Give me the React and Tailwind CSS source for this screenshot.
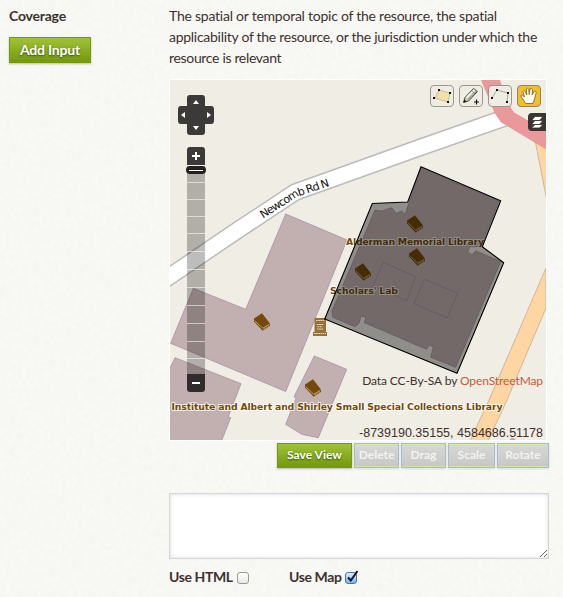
import React from "react";

const BOOKS = [[415, 224], [417, 257], [363, 272], [262, 322], [313, 388]];
const TICKS = [17, 34, 51, 68, 86, 104, 122, 140, 158, 176, 193];

function Book({ x, y }) {
  return (
    <g transform={`translate(${x - 8} ${y - 9})`}>
      <path d="M0 5.5 8 .3 16 10.5V13L8.7 17.8 0 8.5Z" fill="#734a08" />
      <path d="M.6 7.6 8.6 15.2 15.6 11.2M10.2 14.6v2.2M12.2 13.5v2.2M14.2 12.4v2" fill="none" stroke="#d5bfa0" strokeWidth=".7" />
    </g>
  );
}

function Halo({ x, y, width, children }) {
  return (
    <text x={x} y={y} textLength={width} fontSize="9.4" fontFamily="'DejaVu Sans', sans-serif" fontWeight="700" fill="#734a08" stroke="#fff" strokeOpacity=".75" strokeWidth="2" paintOrder="stroke" strokeLinejoin="round">
      {children}
    </text>
  );
}

function MapDrawing() {
  return (
    <svg viewBox="170 80 376 360" className="block h-[360px] w-[376px]">
      <rect x="170" y="80" width="376" height="360" fill="#f0ede5" />
      <path d="M535 140 544 186 548 206V140ZM546 268 489 400 470 441H488L507 400 546 308Z" fill="#fed6a4" stroke="#c9a98a" strokeWidth=".8" />
      <g fill="#c1b0af" stroke="#a590ab" strokeWidth=".8">
        <path d="M285.7 214 347 240 285.7 391.5 170.7 343.3 193.3 288.3 245.7 309.3Z" />
        <path d="M169 370 175 357.7 241 383.7 228.3 416.7 230.7 417.7 221.5 441H169Z" />
        <path d="M314.3 356 346.7 369.3 318.3 437.7 301.7 434.3 285.7 424.3 296 398.3 294 396.7Z" />
        <path d="M421 168 499 201 480.7 246.7H470L467.7 251.7 472 255 475.7 250.7 500.7 261.5 455.7 367.3 430.7 357.3 433.3 346.7 429 345 426.7 349.3 364.3 322.7 366 317.3 361 316 359 323.3 355 326.7 332.7 317.3 332 311 375 210 381.7 211 391.7 207.7 396 213.3 401.7 211 405 214.3Z" />
        <path d="M383 262.3 415.7 276.7 406.7 300.7 373 286ZM424.3 279.3 457.7 293.3 447.3 318 414 303.7Z" />
        <path d="M509 441 512 438 517 441Z" />
      </g>
      <path d="M160 283 232 234 295 192.3 420 147.5 510 116" fill="none" stroke="#bbb" strokeWidth="18" strokeLinejoin="round" />
      <path d="M160 283 232 234 295 192.3 420 147.5 510 116" fill="none" stroke="#fff" strokeWidth="15" strokeLinejoin="round" />
      <path d="M481 79H499L510.7 108 514 112.7 547 132V149.5L501 122 495 113Z" fill="#eb989a" stroke="#d98689" strokeWidth=".5" />
      <path id="newcomb" d="M263 218.5 297 196.8 340 182.5" fill="none" />
      <text fontSize="11" fontFamily="'DejaVu Sans', sans-serif" fill="#111" textLength="75">
        <textPath href="#newcomb" textLength="75">Newcomb Rd N</textPath>
      </text>
      {BOOKS.map(([x, y]) => <Book key={`${x}-${y}`} x={x} y={y} />)}
      <g fill="#98713a">
        <path d="M314.5 318H326V332H327V336H313V332H314.5Z" />
        <path d="M316 320.5h8.5M317 324.5h6.5M317.5 326.8h5M317 329h6M314 333.5h12" stroke="#eadfc9" strokeWidth="1" strokeDasharray="1.6 .6" />
      </g>
      <Halo x="346" y="245.3" width="138">Alderman Memorial Library</Halo>
      <Halo x="330" y="293.8" width="68">Scholars' Lab</Halo>
      <Halo x="171.5" y="409.7" width="331">Institute and Albert and Shirley Small Special Collections Library</Halo>
      <path d="M421 166.7 500.7 200.7 482.3 246.7 503.7 262.7 457 373.3 324.7 319 372.3 203.5 407.7 202Z" fill="#000" fillOpacity=".4" stroke="#000" strokeWidth="1.1" />
    </svg>
  );
}

function PanControl() {
  return (
    <svg viewBox="0 0 36 40" className="absolute left-2 top-[15px] h-10 w-9">
      <path d="M12 0H24Q27 0 27 3V11H33Q36 11 36 14V26Q36 29 33 29H27V37Q27 40 24 40H12Q9 40 9 37V29H3Q0 29 0 26V14Q0 11 3 11H9V3Q9 0 12 0Z" fill="#3c3a38" />
      <path d="M15 9h6l-3-4ZM15 31h6l-3 4ZM7 17v6l-4-3ZM29 17v6l4-3Z" fill="#fff" />
    </svg>
  );
}

function ZoomControl() {
  return (
    <div className="absolute left-[17px] top-[67px] w-[18px]">
      <div className="flex h-[18px] items-center justify-center rounded-t-[3px] bg-[#3c3a38]">
        <svg viewBox="0 0 8 8" className="h-2 w-2"><path d="M0 4h8M4 0v8" stroke="#fff" strokeWidth="2" /></svg>
      </div>
      <svg viewBox="0 0 18 209" className="block h-[209px] w-[18px]">
        <rect width="18" height="209" fill="#000" fillOpacity=".26" />
        {TICKS.map((t) => <rect key={t} y={t} width="18" height="1" fill="#fff" fillOpacity=".55" />)}
        <rect y="0" width="18" height="1" fill="#eee" />
      </svg>
      <div className="flex h-[18px] items-center justify-center rounded-b-[3px] bg-[#302c2b]">
        <div className="h-0.5 w-2 bg-white" />
      </div>
      <div className="absolute -left-px top-[19px] flex h-2 w-5 items-center justify-center rounded-sm bg-[#241f20]">
        <div className="h-px w-3.5 bg-white" />
      </div>
    </div>
  );
}

function Tool({ active, children }) {
  return (
    <div className={`h-[22px] w-6 rounded-[4px] border ${active ? "border-[#8f8668] bg-[#f2be2c]" : "border-[#999791] bg-[#efece4]"}`}>
      <svg viewBox="1 1 22 20" className="h-5 w-[22px]">{children}</svg>
    </div>
  );
}

function Toolbar() {
  return (
    <div className="absolute left-[260px] top-[5px] flex gap-[5px]">
      <Tool>
        <path d="M9 5 20 8 18 17 5 13Z" fill="#f3dfaa" stroke="#b7aa85" strokeWidth=".7" />
        <path d="M8 4h2v2H8ZM19 7h2v2h-2ZM17 16h2v2h-2ZM3 12h2v2h-2Z" fill="#111" />
      </Tool>
      <Tool>
        <path d="M4.500 17.500 6 12.500 14.500 3.500 18.500 6.500 9.500 16Z" fill="#c9cbb9" stroke="#44443c" strokeWidth="1" />
        <path d="M7.500 12.500 15.500 4.800" stroke="#fff" strokeWidth="1.300" />
        <path d="M8.800 14.500 17 6.800M12.800 5.800 16 8.800" stroke="#77776c" strokeWidth=".8" />
        <path d="M4.500 17.500 5.500 14.500 7.500 16.500Z" fill="#111" />
        <path d="M15 17h5M17.500 14.500v5" stroke="#111" strokeWidth="1.200" />
      </Tool>
      <Tool>
        <path d="M4 13 9 5 20 8 19 17" fill="none" stroke="#777" strokeWidth=".6" />
        <path d="M3 12h2v2h-2ZM8 4h2v2h-2ZM19 7h2v2h-2ZM18 16h2v2h-2Z" fill="#111" />
      </Tool>
      <Tool active>
        <path d="M8.500 18.500C7.500 15.500 4 13 4 10.500 5 9.500 6.500 10.500 7.500 12L6 6.500Q6.700 4.500 8.200 6.500L9.800 10 9.300 4Q10.500 2.500 11.700 4L12.200 9.500 13.200 3.700Q14.700 2.800 15.500 4.500L15.200 10 17.200 6.300Q19.500 5.700 19.200 7.800L17.500 14 16 18.500Z" fill="#fffdf0" stroke="#8a6b22" strokeWidth=".9" strokeLinejoin="round" />
      </Tool>
    </div>
  );
}

function Button({ green, size, children }) {
  return (
    <button className={`flex shrink-0 items-center justify-center whitespace-nowrap border pb-px font-bold ${size} ${green ? "border-[#749b0c] bg-linear-to-b from-[#a0c235] to-[#749909] text-white shadow-[0_1px_2px_rgba(0,0,0,0.25)] [text-shadow:0_1px_2px_#344a00]" : "border-[#a3bdd5] bg-linear-to-b from-[#d8d9d6] to-[#c7c8c5] text-[#f2f2ef] shadow-[inset_0_1px_0_#d9e5ad,inset_0_-1px_0_#d4dfb4,0_1px_2px_rgba(0,0,0,0.12)]"}`}>
      {children}
    </button>
  );
}

function PaperTexture() {
  return (
    <svg className="pointer-events-none absolute inset-0 h-full w-full opacity-[0.035]">
      <filter id="paper">
        <feTurbulence type="fractalNoise" baseFrequency="0.18" numOctaves="3" seed="4" />
        <feColorMatrix values="0 0 0 0 .45  0 0 0 0 .45  0 0 0 0 .35  2.5 0 0 0 -.9" />
      </filter>
      <rect width="100%" height="100%" filter="url(#paper)" />
    </svg>
  );
}

export default function App() {
  return (
    <div className="relative flex h-[597px] w-[563px] overflow-hidden bg-[#f8f9f4] pl-[9px] font-[Lato,sans-serif] text-[14px] text-[#40312f]">
      <PaperTexture />
      <aside className="relative w-[160px] shrink-0 pt-[5px]">
        <div className="text-[14px] font-bold leading-[21px] tracking-[-0.2px]">Coverage</div>
        <div className="pt-[11px]"><Button green size="h-[26px] w-[82px] text-[14px] tracking-[-0.2px]">Add Input</Button></div>
      </aside>
      <main className="relative w-[380px] pt-[5px]">
        <div className="whitespace-nowrap leading-[21px]">
          <div className="tracking-[-0.24px]">The spatial or temporal topic of the resource, the spatial</div>
          <div className="tracking-[-0.28px]">applicability of the resource, or the jurisdiction under which the</div>
          <div className="tracking-[-0.33px]">resource is relevant</div>
        </div>
        <div className="relative mt-[11px] h-[362px] w-[378px] border border-white">
          <MapDrawing />
          <PanControl />
          <ZoomControl />
          <Toolbar />
          <div className="absolute right-0 top-[33px] h-[18px] w-[18px] rounded-l-[4px] bg-[#383634]">
            <svg viewBox="0 0 18 18" className="h-[18px] w-[18px]">
              <path d="M7 11.500H15L11.500 15H3.500ZM7 7.500H15L11.500 11.500H3.500ZM7 3.500H15L11.500 7.500H3.500Z" fill="#fff" stroke="#383634" strokeWidth=".8" />
            </svg>
          </div>
          <div className="absolute bottom-[50px] right-[3px] whitespace-nowrap text-[12px] leading-[18px] tracking-[-0.1px]">Data CC-By-SA by <span className="text-[#c8593c]">OpenStreetMap</span></div>
          <div className="absolute bottom-[-2px] right-[3px] whitespace-nowrap font-['Liberation_Sans',sans-serif] text-[12.5px] leading-[18px]">-8739190.35155, 4584686.51178</div>
        </div>
        <div className="mt-[2px] flex justify-end gap-[2px]">
          <Button green size="h-[25px] w-[75px] text-[12px]">Save View</Button>
          <Button size="h-[25px] w-[45px] text-[12px]">Delete</Button>
          <Button size="h-[25px] w-[45px] text-[12px]">Drag</Button>
          <Button size="h-[25px] w-[47px] text-[12px]">Scale</Button>
          <Button size="h-[25px] w-[52px] text-[12px]">Rotate</Button>
        </div>
        <textarea className="mt-[25px] block h-[66px] w-[380px] resize border border-[#d5d7d6] bg-white shadow-[inset_0_0_4px_rgba(0,0,0,0.15)]" />
        <div className="flex pt-[7px] font-bold leading-[21px] tracking-[-0.4px]">
          <div className="flex w-[120px] items-center gap-[5px]">
            <span className="w-[63px] whitespace-nowrap">Use HTML</span>
            <span className="mt-[2px] h-3 w-3 rounded-[3px] border border-[#999] bg-linear-to-b from-white to-[#e9e9e9]" />
          </div>
          <div className="flex items-center gap-[3px]">
            <span className="w-[53px] whitespace-nowrap">Use Map</span>
            <span className="mt-[2px] h-3 w-3 rounded-[3px] border border-[#5570a5] bg-linear-to-b from-[#dcecff] to-[#79b5f0]">
              <svg viewBox="0 0 14 14" className="-mt-[3px] h-[14px] w-[14px]"><path d="M2 7.500 4.800 10.500 11.500 1" fill="none" stroke="#0b1430" strokeWidth="2" /></svg>
            </span>
          </div>
        </div>
      </main>
    </div>
  );
}
